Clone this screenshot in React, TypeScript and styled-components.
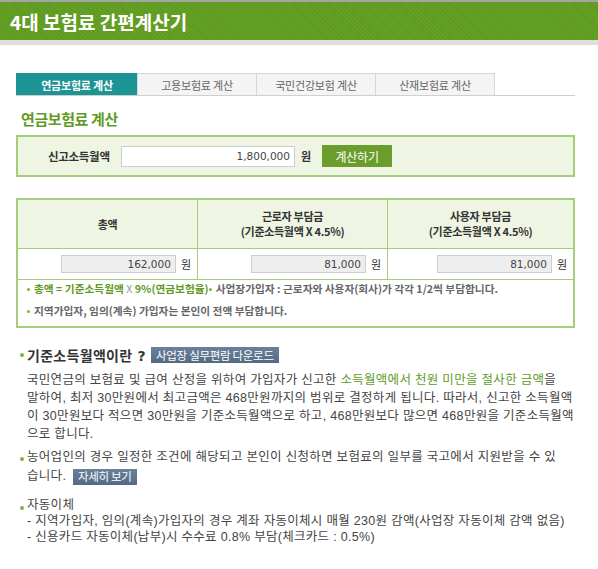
import React from 'react';
import styled, { createGlobalStyle } from 'styled-components';

const GlobalStyle = createGlobalStyle`
  html, body {
    margin: 0;
    padding: 0;
    background: #ffffff;
  }
  body {
    font-family: "Noto Sans CJK KR", "Noto Sans", sans-serif;
    color: #444;
  }
`;

const green = '#5f9b1f';
const lineGreen = '#a6cd7c';
const paleGreen = '#eef5e3';
const bodyFont = '"Liberation Sans", "Noto Sans CJK KR", sans-serif';

const Header = styled.header`
  height: 38px;
  border-top: 2px solid #a4a4a4;
  border-bottom: 5px solid #dedede;
  background-color: #63a024;
  background-image: repeating-linear-gradient(
    45deg,
    rgba(0, 0, 0, 0.05) 0 1px,
    transparent 1px 3px
  );
  display: flex;
  align-items: center;
  padding-left: 10px;
`;

const HeaderTitle = styled.h1`
  margin: 0;
  font-size: 19px;
  font-weight: 700;
  color: #ffffff;
`;

const Content = styled.main`
  width: 559px;
  margin-left: 16px;
`;

const Tabs = styled.nav`
  display: flex;
  margin-top: 28px;
  border-bottom: 1px solid #cfcfcf;
`;

const Tab = styled.div<{ $active?: boolean }>`
  width: 120px;
  height: 22px;
  box-sizing: border-box;
  display: flex;
  align-items: center;
  justify-content: center;
  font-size: 11px;
  letter-spacing: -0.2px;
  font-weight: ${({ $active }) => ($active ? 700 : 400)};
  color: ${({ $active }) => ($active ? '#ffffff' : '#666')};
  background: ${({ $active }) => ($active ? '#1d9494' : '#f4f4f4')};
  border: 1px solid ${({ $active }) => ($active ? '#1d9494' : '#d6d6d6')};
  border-bottom: none;
  margin-left: -1px;

  &:first-child {
    margin-left: 0;
    width: 122px;
  }
`;

const SectionTitle = styled.h2`
  margin: 12px 0 0 5px;
  height: 22px;
  line-height: 22px;
  font-size: 15px;
  font-weight: 700;
  letter-spacing: -0.4px;
  color: ${green};
`;

const InputPanel = styled.section`
  margin-top: 5px;
  height: 42px;
  box-sizing: border-box;
  border: 2px solid ${lineGreen};
  background: ${paleGreen};
  display: flex;
  align-items: center;
  padding-left: 30px;
`;

const FieldLabel = styled.label`
  font-size: 11.5px;
  font-weight: 700;
  color: #333;
  letter-spacing: -0.3px;
  width: 73px;
`;

const AmountInput = styled.div<{ $readOnly?: boolean; $width: number }>`
  width: ${({ $width }) => $width}px;
  height: ${({ $readOnly }) => ($readOnly ? 18 : 21)}px;
  box-sizing: border-box;
  border: 1px solid #cdcdcd;
  background: ${({ $readOnly }) => ($readOnly ? '#eeeeee' : '#ffffff')};
  display: flex;
  align-items: center;
  justify-content: flex-end;
  padding-right: 4px;
  font-family: "DejaVu Sans", sans-serif;
  font-size: 10.5px;
  color: #444;
`;

const Unit = styled.span<{ $bold?: boolean }>`
  margin-left: ${({ $bold }) => ($bold ? 6 : 5)}px;
  font-size: 11px;
  font-weight: ${({ $bold }) => ($bold ? 700 : 400)};
  color: #333;
`;

const CalcButton = styled.button`
  margin-left: 11px;
  width: 70px;
  height: 22px;
  border: none;
  background: #6a9d2c;
  color: #ffffff;
  font-family: inherit;
  font-size: 12px;
  padding: 0;
  letter-spacing: -0.2px;
`;

const ResultTable = styled.table`
  margin-top: 21px;
  width: 559px;
  border-collapse: collapse;
  border: 2px solid ${lineGreen};
`;

const HeadCell = styled.th<{ $width?: number }>`
  width: ${({ $width }) => ($width ? `${$width}px` : 'auto')};
  height: 48px;
  padding: 0;
  background: ${paleGreen};
  border: 1px solid ${lineGreen};
  font-size: 11px;
  font-weight: 700;
  color: #333;
  line-height: 15px;
  letter-spacing: -0.3px;
`;

const ValueCell = styled.td`
  height: 30px;
  padding: 0;
  border: 1px solid ${lineGreen};
`;

const ValueWrap = styled.div`
  display: flex;
  align-items: center;
  justify-content: flex-end;
  padding-right: 6px;
`;

const NoteCell = styled.td`
  height: 46px;
  padding: 0 0 0 9px;
  border: 1px solid ${lineGreen};
  vertical-align: top;
`;

const NoteLine = styled.div`
  font-size: 10.7px;
  font-weight: 700;
  color: #666;
  height: 22px;
  line-height: 17px;
  white-space: nowrap;
`;

const NoteGreen = styled.span`
  color: ${green};
`;

const Times = styled.span`
  font-weight: 400;
  color: #999;
`;

const Dot = styled.span`
  display: inline-block;
  width: 3px;
  height: 3px;
  border-radius: 50%;
  background: #7cb342;
  vertical-align: middle;
  margin: 0 4px 2px 0;
`;

const Info = styled.section`
  margin-top: 18px;
  padding-left: 4px;
`;

const InfoHeading = styled.div`
  display: flex;
  align-items: center;
  height: 18px;
`;

const BigDot = styled.span`
  width: 4px;
  height: 4px;
  border-radius: 50%;
  background: #7cb342;
  margin-right: 3px;
`;

const HeadingText = styled.span`
  font-family: "DejaVu Sans", "Noto Sans CJK KR", sans-serif;
  font-size: 14px;
  font-weight: 700;
  letter-spacing: 0.3px;
  color: #333;
`;

const Badge = styled.span<{ $left: number }>`
  margin-left: ${({ $left }) => $left}px;
  display: inline-flex;
  align-items: center;
  height: 16px;
  padding: 0 5px;
  background: linear-gradient(#6a819b, #536a84);
  color: #ffffff;
  font-family: "Noto Sans CJK KR", sans-serif;
  font-size: 11.5px;
  letter-spacing: -0.3px;
  vertical-align: middle;
`;

const Paragraph = styled.p`
  margin: 7px 0 0 7px;
  font-family: ${bodyFont};
  font-size: 12.5px;
  line-height: 18px;
  letter-spacing: 0.3px;
  color: #444;
  white-space: nowrap;
`;

const Highlight = styled.span`
  color: ${green};
`;

const BulletItem = styled.div<{ $top: number }>`
  margin-top: ${({ $top }) => $top}px;
  display: flex;
  align-items: flex-start;
`;

const BulletMark = styled.span`
  width: 4px;
  height: 4px;
  border-radius: 50%;
  background: #7cb342;
  margin: 9px 3px 0 0;
  flex: none;
`;

const BulletText = styled.div<{ $lh: number }>`
  font-family: ${bodyFont};
  font-size: 12.5px;
  line-height: ${({ $lh }) => $lh}px;
  letter-spacing: 0.3px;
  color: #444;
  white-space: nowrap;
`;

const SubLine = styled.div`
  line-height: 16px;
`;

export default function App() {
  return (
    <>
      <GlobalStyle />
      <Header>
        <HeaderTitle>4대 보험료 간편계산기</HeaderTitle>
      </Header>
      <Content>
        <Tabs>
          <Tab $active>연금보험료 계산</Tab>
          <Tab>고용보험료 계산</Tab>
          <Tab>국민건강보험 계산</Tab>
          <Tab>산재보험료 계산</Tab>
        </Tabs>

        <SectionTitle>연금보험료 계산</SectionTitle>

        <InputPanel>
          <FieldLabel>신고소득월액</FieldLabel>
          <AmountInput $width={174}>1,800,000</AmountInput>
          <Unit $bold>원</Unit>
          <CalcButton>계산하기</CalcButton>
        </InputPanel>

        <ResultTable>
          <thead>
            <tr>
              <HeadCell $width={179}>총액</HeadCell>
              <HeadCell $width={189}>
                근로자 부담금
                <br />
                (기준소득월액 X 4.5%)
              </HeadCell>
              <HeadCell>
                사용자 부담금
                <br />
                (기준소득월액 X 4.5%)
              </HeadCell>
            </tr>
          </thead>
          <tbody>
            <tr>
              {['162,000', '81,000', '81,000'].map((v, i) => (
                <ValueCell key={i}>
                  <ValueWrap>
                    <AmountInput $readOnly $width={115}>
                      {v}
                    </AmountInput>
                    <Unit>원</Unit>
                  </ValueWrap>
                </ValueCell>
              ))}
            </tr>
            <tr>
              <NoteCell colSpan={3}>
                <NoteLine>
                  <NoteGreen>
                    <Dot />
                    총액 = 기준소득월액 <Times>X</Times> 9%(연금보험율)
                  </NoteGreen>
                  <Dot />
                  사업장가입자 : 근로자와 사용자(회사)가 각각 1/2씩 부담합니다.
                </NoteLine>
                <NoteLine>
                  <Dot />
                  지역가입자, 임의(계속) 가입자는 본인이 전액 부담합니다.
                </NoteLine>
              </NoteCell>
            </tr>
          </tbody>
        </ResultTable>

        <Info>
          <InfoHeading>
            <BigDot />
            <HeadingText>기준소득월액이란 ?</HeadingText>
            <Badge $left={5}>사업장 실무편람 다운로드</Badge>
          </InfoHeading>
          <Paragraph>
            국민연금의 보험료 및 급여 산정을 위하여 가입자가 신고한{' '}
            <Highlight>소득월액에서 천원 미만을 절사한 금액</Highlight>을
            <br />
            말하여, 최저 30만원에서 최고금액은 468만원까지의 범위로 결정하게 됩니다. 따라서, 신고한 소득월액
            <br />
            이 30만원보다 적으면 30만원을 기준소득월액으로 하고, 468만원보다 많으면 468만원을 기준소득월액
            <br />
            으로 합니다.
          </Paragraph>

          <BulletItem $top={5}>
            <BulletMark />
            <BulletText $lh={19}>
              농어업인의 경우 일정한 조건에 해당되고 본인이 신청하면 보험료의 일부를 국고에서 지원받을 수 있
              <br />
              습니다. <Badge $left={3}>자세히 보기</Badge>
            </BulletText>
          </BulletItem>

          <BulletItem $top={11}>
            <BulletMark />
            <BulletText $lh={16}>
              <SubLine>자동이체</SubLine>
              <SubLine>
                - 지역가입자, 임의(계속)가입자의 경우 계좌 자동이체시 매월 230원 감액(사업장 자동이체 감액 없음)
              </SubLine>
              <SubLine>- 신용카드 자동이체(납부)시 수수료 0.8% 부담(체크카드 : 0.5%)</SubLine>
            </BulletText>
          </BulletItem>
        </Info>
      </Content>
    </>
  );
}
